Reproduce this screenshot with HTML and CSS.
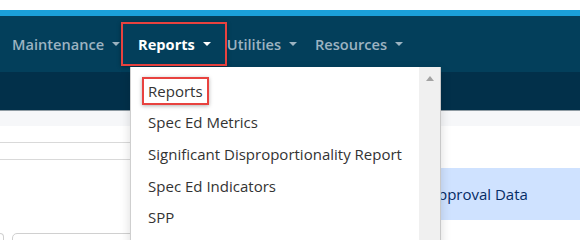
FILE: index.html
```html
<!DOCTYPE html>
<html lang="en">
<head>
    <meta charset="UTF-8">
    <title>Reports menu</title>
    <link rel="stylesheet" href="styles.css">
</head>
<body>
    <div class="top-gap"></div>

    <header class="navbar">
        <nav class="nav">
            <div class="nav-item">
                <a class="nav-link">Maintenance<span class="caret"></span></a>
            </div>
            <div class="nav-item open">
                <a class="nav-link active">Reports<span class="caret"></span></a>

                <div class="dropdown">
                    <ul class="dropdown-list">
                        <li class="dropdown-item"><span class="mark">Reports</span></li>
                        <li class="dropdown-item">Spec Ed Metrics</li>
                        <li class="dropdown-item">Significant Disproportionality Report</li>
                        <li class="dropdown-item">Spec Ed Indicators</li>
                        <li class="dropdown-item">SPP</li>
                    </ul>
                    <div class="scrollbar">
                        <span class="arrow arrow-up"></span>
                        <span class="arrow arrow-down"></span>
                    </div>
                </div>
            </div>
            <div class="nav-item">
                <a class="nav-link">Utilities<span class="caret"></span></a>
            </div>
            <div class="nav-item">
                <a class="nav-link">Resources<span class="caret"></span></a>
            </div>
        </nav>
    </header>

    <div class="subbar"></div>
    <div class="toolbar"></div>

    <main class="content">
        <aside class="side">
            <div class="side-row"></div>
            <div class="side-row"></div>
            <div class="side-fill"></div>
            <div class="inputs">
                <span class="input input-small"></span>
                <span class="input"></span>
            </div>
        </aside>
        <section class="list">
            <div class="list-item selected">Submission Approval Data</div>
        </section>
    </main>
</body>
</html>
```

FILE: styles.css
```css
* {
    margin: 0;
    padding: 0;
    box-sizing: border-box;
}

body {
    font-family: 'Open Sans', 'Noto Sans', sans-serif;
    font-size: 15px;
    color: #333;
    background: #fff;
    overflow: hidden;
}

.top-gap {
    height: 10px;
    background: #fff;
}

/* main navigation */
.navbar {
    height: 62px;
    background: #033f5b;
    border-top: 6px solid #1ba0da;
}

.nav {
    display: flex;
    align-items: center;
    height: 100%;
    padding-left: 3px;
}

.nav-item {
    position: relative;
}

.nav-link {
    display: flex;
    align-items: center;
    height: 44px;
    padding: 0 9px;
    color: #9cb3c1;
    font-size: 14.6px;
    font-weight: 600;
    text-decoration: none;
}

.nav-link.active {
    color: #fff;
    font-weight: 700;
    border: 2px solid #e8423f;
    padding: 0 14px 0 15px;
    margin: 0 -9px 0 -8px;
    box-shadow: 0 1px 4px rgba(0,0,0,0.35);
}

.caret {
    width: 0;
    height: 0;
    margin-left: 8px;
    border-left: 4px solid transparent;
    border-right: 4px solid transparent;
    border-top: 4px solid currentColor;
}

/* dropdown menu */
.dropdown {
    position: absolute;
    top: calc(100% + 1px);
    left: 1px;
    width: 311px;
    height: 190px;
    display: flex;
    background: #fff;
    border-left: 1px solid #cfcfcf;
    border-right: 1px solid #c8c8c8;
    box-shadow: 0 4px 10px rgba(0,0,0,0.15);
    z-index: 10;
}

.dropdown-list {
    flex: 1;
    list-style: none;
    padding-top: 8px;
}

.dropdown-item {
    height: 31.6px;
    display: flex;
    align-items: center;
    padding-left: 17px;
    color: #333;
    white-space: nowrap;
}

.mark {
    margin-left: -6px;
    padding: 2px 4px;
    border: 2px solid #e8423f;
    box-shadow: 0 1px 4px rgba(0,0,0,0.3);
}

.scrollbar {
    width: 21px;
    background: #f0f0f0;
    display: flex;
    flex-direction: column;
    justify-content: space-between;
    align-items: center;
    padding: 9px 0 6px;
}

.arrow {
    width: 0;
    height: 0;
    border-left: 4.5px solid transparent;
    border-right: 4.5px solid transparent;
}

.arrow-up {
    border-bottom: 5px solid #a3a3a3;
}

.arrow-down {
    border-top: 5px solid #c2c2c2;
}

/* page below the menu */
.subbar {
    height: 39px;
    background: #02304a;
    border-bottom: 1px solid #8f9ba3;
}

.toolbar {
    height: 15px;
    background: #f6f7f9;
}

.content {
    display: grid;
    grid-template-columns: 150px 1fr;
    column-gap: 10px;
}

.side {
    display: flex;
    flex-direction: column;
}

.side-row {
    height: 17px;
    border-bottom: 1px solid #d9d9d9;
}

.side-fill {
    height: 73px;
}

.inputs {
    display: flex;
    gap: 8px;
}

.input {
    flex: 1;
    height: 20px;
    border: 1px solid #d0d0d0;
    border-radius: 5px;
}

.input-small {
    flex: 0 0 4px;
    border-left: none;
    border-radius: 0 5px 5px 0;
}

.list {
    padding-top: 42px;
}

.list-item {
    height: 52px;
    display: flex;
    align-items: center;
    padding-left: 184px;
    white-space: nowrap;
}

.list-item.selected {
    background: #cfe2ff;
    color: #052c65;
}
```
